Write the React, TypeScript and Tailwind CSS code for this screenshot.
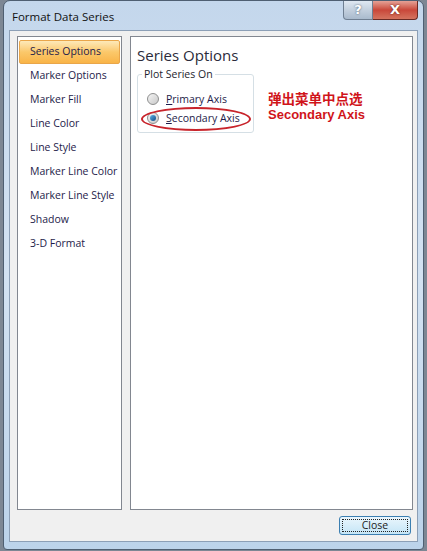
import React from "react"

const items = [
  "Series Options",
  "Marker Options",
  "Marker Fill",
  "Line Color",
  "Line Style",
  "Marker Line Color",
  "Marker Line Style",
  "Shadow",
  "3-D Format",
]

const Radio: React.FC<{ checked?: boolean }> = ({ checked }) => (
  <span className="relative w-[12px] h-[12px] rounded-full border border-[#8e8f8f] bg-gradient-to-br from-[#f4f4f4] to-[#c9c9c9] flex items-center justify-center">
    {checked && (
      <span className="w-[6px] h-[6px] rounded-full bg-gradient-to-br from-[#5fb3e8] to-[#0f4c86]" />
    )}
  </span>
)

const App: React.FC = () => {
  return (
    <div className="w-[427px] h-[551px] bg-[#7d8794] overflow-hidden font-['Open_Sans',sans-serif]">
      <div className="ml-[3px] w-[421px] h-[550px] rounded-t-[7px] rounded-b-[4px] border border-[#4f5f72] bg-gradient-to-b from-[#c4d7ec] via-[#d3e2f2] to-[#bcd3ea] flex flex-col">
        {/* title bar */}
        <div className="h-[29px] flex items-start justify-between pl-[8px] pr-[5px]">
          <span className="mt-[7px] text-[11.5px] text-[#111] whitespace-nowrap">Format Data Series</span>
          <div className="flex">
            <div className="w-[30px] h-[19px] rounded-bl-[4px] border border-t-0 border-[#6f7f92] bg-gradient-to-b from-[#dfe8f2] via-[#c3d0de] to-[#a9bacd] flex items-center justify-center text-white text-[13px] font-bold font-['DejaVu_Sans',sans-serif] [text-shadow:0_0_2px_#3d5066]">
              ?
            </div>
            <div className="w-[45px] h-[19px] rounded-br-[4px] border border-t-0 border-l-0 border-[#6a2a24] bg-gradient-to-b from-[#e4a196] via-[#c9473a] to-[#d4735f] flex items-center justify-center text-white text-[13px] font-bold font-['DejaVu_Sans',sans-serif] [text-shadow:0_0_2px_#5a1a12]">
              X
            </div>
          </div>
        </div>

        {/* client area */}
        <div className="mx-[5px] mb-[7px] flex-1 bg-[#f0f0f0] border border-[#8c9fb6] flex flex-col">
          <div className="flex-1 flex gap-[8px] pl-[7px] pr-[4px] pt-[5px]">
            {/* category list */}
            <div className="w-[105px] h-[474px] bg-white border border-[#828790] pt-[3px] px-[1px]">
              {items.map((it, i) => (
                <div
                  key={it}
                  className={
                    i === 0
                      ? "h-[24px] flex items-center pl-[10px] text-[10.5px] whitespace-nowrap text-[#1e1b4a] rounded-[2px] border border-[#e9a64a] bg-gradient-to-b from-[#fde9b8] via-[#fbc86a] to-[#f9b447]"
                      : "h-[24px] flex items-center pl-[11px] text-[10.5px] whitespace-nowrap text-[#1e1b4a]"
                  }
                >
                  {it}
                </div>
              ))}
            </div>

            {/* options pane */}
            <div className="flex-1 h-[474px] bg-white border border-[#828790] pl-[6px] pt-[7px]">
              <div className="text-[15px] text-[#2b2b3a] leading-[22px] whitespace-nowrap">Series Options</div>
              <div className="flex items-start gap-[14px] mt-[3px]">
                <div className="relative w-[117px] h-[59px] border border-[#d5dfe5] rounded-[3px] mt-[5px]">
                  <span className="absolute -top-[8px] left-[4px] bg-white px-[2px] text-[10.5px] leading-[14px] whitespace-nowrap text-[#1e1e2e]">
                    Plot Series On
                  </span>
                  <div className="flex flex-col gap-[7px] pt-[18px] pl-[9px]">
                    <div className="flex items-center gap-[7px] text-[10.5px] leading-[12px] whitespace-nowrap text-[#1e1b4a]">
                      <Radio />
                      <span>
                        <span className="underline">P</span>rimary Axis
                      </span>
                    </div>
                    <div className="flex items-center gap-[7px] text-[10.5px] leading-[12px] whitespace-nowrap text-[#1e1b4a]">
                      <Radio checked />
                      <span>
                        <span className="underline">S</span>econdary Axis
                      </span>
                    </div>
                  </div>
                  <div className="absolute left-[3px] top-[32px] w-[110px] h-[24px] rounded-[50%] border-2 border-[#c8242b]" />
                </div>
                <div className="mt-[22px] text-[#d0141a] font-bold flex flex-col gap-[1px]">
                  <div className="h-[15px] leading-[15px] text-[13.5px] font-['Noto_Sans_CJK_SC',sans-serif] whitespace-nowrap">弹出菜单中点选</div>
                  <div className="h-[15px] leading-[15px] text-[13px] font-['Liberation_Sans',sans-serif] whitespace-nowrap">Secondary Axis</div>
                </div>
              </div>
            </div>
          </div>

          {/* footer */}
          <div className="h-[29px] flex items-center justify-end pr-[6px] pb-[2px]">
            <button className="w-[72px] h-[19px] rounded-[3px] border border-[#3c7fb1] bg-gradient-to-b from-[#eaf6fd] to-[#c4e5f6] p-[2px]">
              <span className="w-full h-full border border-dotted border-[#222] flex items-center justify-center text-[10.5px] text-[#1b1b1b] leading-none">
                Close
              </span>
            </button>
          </div>
        </div>
      </div>
    </div>
  )
}

export default App
